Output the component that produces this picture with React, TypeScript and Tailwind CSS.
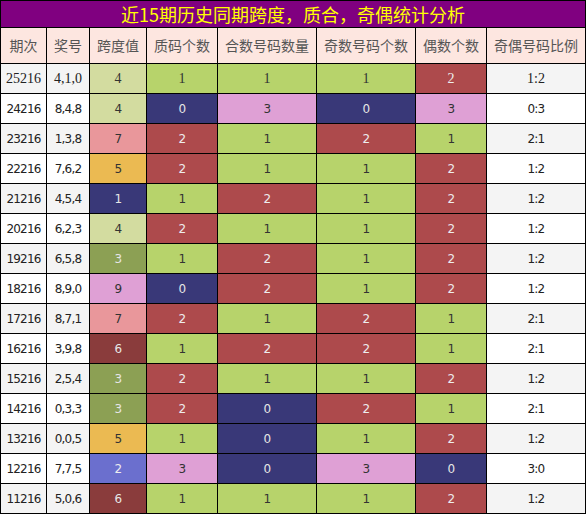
import React from 'react';

const headers = ['期次', '奖号', '跨度值', '质码个数', '合数号码数量', '奇数号码个数', '偶数个数', '奇偶号码比例'];

const rows: [string, string, number, number, number, number, number, string][] = [
  ['25216', '4,1,0', 4, 1, 1, 1, 2, '1:2'],
  ['24216', '8,4,8', 4, 0, 3, 0, 3, '0:3'],
  ['23216', '1,3,8', 7, 2, 1, 2, 1, '2:1'],
  ['22216', '7,6,2', 5, 2, 1, 1, 2, '1:2'],
  ['21216', '4,5,4', 1, 1, 2, 1, 2, '1:2'],
  ['20216', '6,2,3', 4, 2, 1, 1, 2, '1:2'],
  ['19216', '6,5,8', 3, 1, 2, 1, 2, '1:2'],
  ['18216', '8,9,0', 9, 0, 2, 1, 2, '1:2'],
  ['17216', '8,7,1', 7, 2, 1, 2, 1, '2:1'],
  ['16216', '3,9,8', 6, 1, 2, 2, 1, '2:1'],
  ['15216', '2,5,4', 3, 2, 1, 1, 2, '1:2'],
  ['14216', '0,3,3', 3, 2, 0, 2, 1, '2:1'],
  ['13216', '0,0,5', 5, 1, 0, 1, 2, '1:2'],
  ['12216', '7,7,5', 2, 3, 0, 3, 0, '3:0'],
  ['11216', '5,0,6', 6, 1, 1, 1, 2, '1:2'],
];

// span value colours
const spanCls: Record<number, string> = {
  1: 'bg-[#393878] text-[#e6e6e6]',
  2: 'bg-[#6b6fce] text-[#eeeeee]',
  3: 'bg-[#8ca054] text-[#e6e6e6]',
  4: 'bg-[#d3dca0] text-[#333333]',
  5: 'bg-[#ebba52] text-[#333333]',
  6: 'bg-[#8a3c3c] text-[#e6e6e6]',
  7: 'bg-[#e9979b] text-[#333333]',
  9: 'bg-[#dfa0d5] text-[#333333]',
};

// count colours (0-3)
const countCls: Record<number, string> = {
  0: 'bg-[#393878] text-[#e6e6e6]',
  1: 'bg-[#b7d36b] text-[#333333]',
  2: 'bg-[#ad4a4c] text-[#eeeeee]',
  3: 'bg-[#dfa0d5] text-[#333333]',
};

export default function App() {
  return (
    <div className="w-[586px] h-[514px] bg-black p-px grid grid-cols-[45px_42px_56px_70px_98px_98px_70px_98px] grid-rows-[26px_35px_repeat(15,29px)] gap-px">
      <div className="col-span-8 bg-[#800080] text-[#ffff00] text-[18px] leading-[26px] text-center font-['Noto_Sans_CJK_SC',sans-serif]">
        近15期历史同期跨度，质合，奇偶统计分析
      </div>
      {headers.map((h) => (
        <div key={h} className="bg-[#fde6e0] text-[#555555] text-[14px] flex items-center justify-center font-['Noto_Sans_CJK_SC',sans-serif]">
          {h}
        </div>
      ))}
      {rows.map((r, i) => {
        const stripe = i % 2 === 0 ? 'bg-[#f4f4f4]' : 'bg-white';
        const font = i === 0
          ? "font-['Liberation_Serif',serif] text-[14px]"
          : "font-['DejaVu_Sans',sans-serif] text-[12px] tracking-[-0.8px]";
        const cell = `flex items-center justify-center ${font}`;
        return (
          <React.Fragment key={r[0]}>
            <div className={`${cell} ${stripe} text-[#222222]`}>{r[0]}</div>
            <div className={`${cell} ${stripe} text-[#222222]`}>{r[1]}</div>
            <div className={`${cell} ${spanCls[r[2]]}`}>{r[2]}</div>
            <div className={`${cell} ${countCls[r[3]]}`}>{r[3]}</div>
            <div className={`${cell} ${countCls[r[4]]}`}>{r[4]}</div>
            <div className={`${cell} ${countCls[r[5]]}`}>{r[5]}</div>
            <div className={`${cell} ${countCls[r[6]]}`}>{r[6]}</div>
            <div className={`${cell} ${stripe} text-[#222222]`}>{r[7]}</div>
          </React.Fragment>
        );
      })}
    </div>
  );
}
